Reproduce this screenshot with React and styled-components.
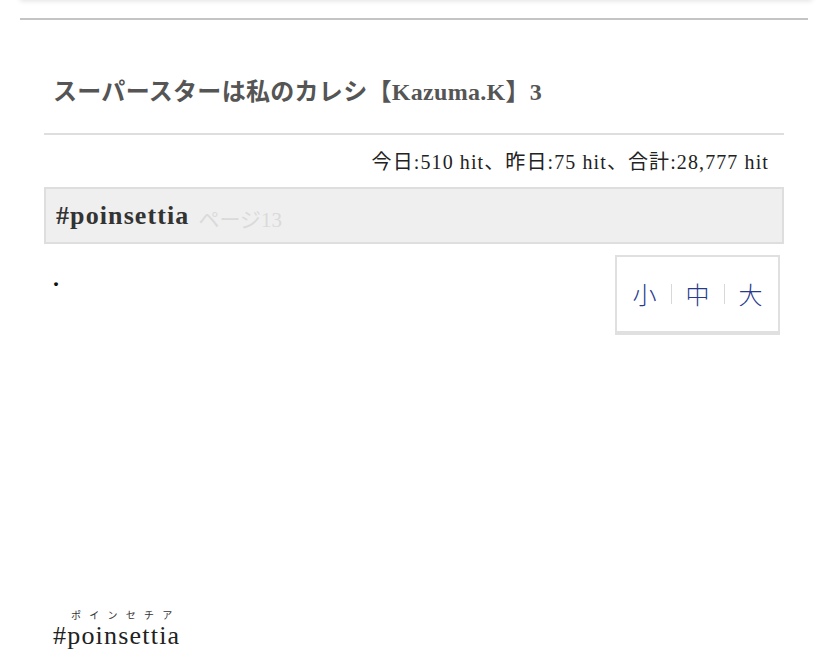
import React from "react";
import styled, { createGlobalStyle } from "styled-components";

const Global = createGlobalStyle`
  html, body { margin: 0; padding: 0; background: #fff; }
  body { font-family: "Liberation Serif", "Noto Sans CJK JP", serif; }
`;

const Page = styled.div`
  width: 828px;
  height: 668px;
  overflow: hidden;
  position: relative;
  background: #fff;
`;

const TopCard = styled.div`
  margin: -20px 16px 0 20px;
  height: 20px;
  background: #fff;
  box-shadow: 0 1px 5px rgba(0, 0, 0, 0.12);
`;

const TopRule = styled.div`
  margin: 18px 20px 0 20px;
  height: 2px;
  background: #c4c4c4;
`;

const Content = styled.div`
  padding: 0 44px 0 44px;
`;

const Title = styled.h1`
  margin: 0;
  padding: 57px 0 0 9px;
  height: 56px;
  font-size: 24px;
  font-weight: bold;
  color: #555;
  letter-spacing: 0.3px;
  border-bottom: 2px solid #dedede;
  line-height: 30px;
  box-sizing: content-box;
`;

const Hits = styled.div`
  text-align: right;
  padding: 15px 15px 0 0;
  font-size: 20px;
  letter-spacing: 1.1px;
  color: #222;
  height: 37px;
  line-height: 24px;
`;

const ChapterBar = styled.div`
  background: #efefef;
  border: 2px solid #dedede;
  height: 53px;
  display: flex;
  align-items: center;
  padding-left: 10px;
  gap: 9px;
`;

const ChapterName = styled.span`
  font-size: 26px;
  letter-spacing: 1.1px;
  font-weight: bold;
  color: #333;
`;

const PageNo = styled.span`
  font-size: 21px;
  color: #dadada;
  padding-top: 4px;
`;

const Body = styled.div`
  display: flex;
  justify-content: space-between;
  align-items: flex-start;
  padding-top: 11px;
`;

const Dot = styled.span`
  margin: 10px 0 0 9px;
  font-size: 24px;
  font-weight: bold;
  color: #111;
`;

const SizeBox = styled.div`
  margin-right: 4px;
  width: 161px;
  height: 74px;
  border: 2px solid #e0e0e0;
  border-bottom-width: 4px;
  display: flex;
  align-items: center;
  justify-content: center;
`;

const SizeBtn = styled.span`
  font-family: "Noto Sans CJK JP", sans-serif;
  font-size: 24px;
  color: #273a8c;
  padding: 0 14px;
  line-height: 30px;
  font-weight: 300;
`;

const Sep = styled.span`
  width: 1px;
  height: 20px;
  background: #d8d8d8;
`;

const Footer = styled.div`
  position: absolute;
  left: 53px;
  top: 607px;
  font-size: 26px;
  letter-spacing: 1.2px;
  color: #222;
`;

const Ruby = styled.ruby`
  rt {
    font-family: "Noto Sans CJK JP", sans-serif;
    font-size: 10px;
    color: #333;
    letter-spacing: 8px;
    padding-left: 18px;
    line-height: 14px;
    padding-bottom: 2px;
  }
`;

export default function App() {
  return (
    <Page>
      <Global />
      <TopCard />
      <TopRule />
      <Content>
        <Title>スーパースターは私のカレシ【Kazuma.K】3</Title>
        <Hits>今日:510 hit、昨日:75 hit、合計:28,777 hit</Hits>
        <ChapterBar>
          <ChapterName>#poinsettia</ChapterName>
          <PageNo>ページ13</PageNo>
        </ChapterBar>
        <Body>
          <Dot>.</Dot>
          <SizeBox>
            <SizeBtn>小</SizeBtn>
            <Sep />
            <SizeBtn>中</SizeBtn>
            <Sep />
            <SizeBtn>大</SizeBtn>
          </SizeBox>
        </Body>
      </Content>
      <Footer>
        <Ruby>
          #poinsettia<rt>ポインセチア</rt>
        </Ruby>
      </Footer>
    </Page>
  );
}
